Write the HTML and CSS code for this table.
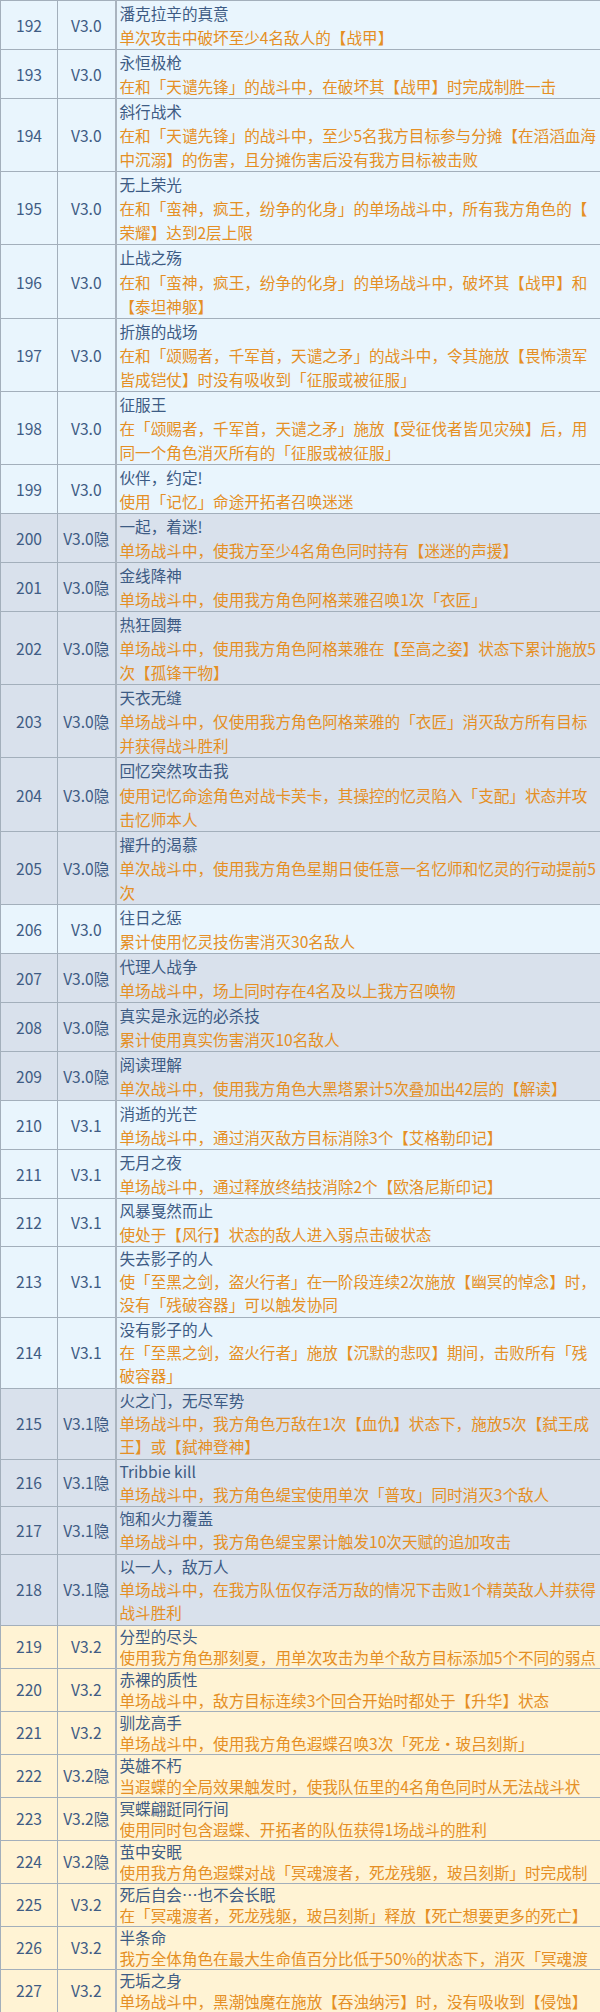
FILE: index.html
```html
<!DOCTYPE html>
<html lang="zh-CN">
<head>
<meta charset="utf-8">
<title>成就列表</title>
<link rel="stylesheet" href="styles.css">
</head>
<body>
<table class="ach">
<colgroup><col class="c-num"><col class="c-ver"><col class="c-info"></colgroup>
<tbody class="sec-a">
<tr class="blue"><td class="num">192</td><td class="ver">V3.0</td><td class="info"><div class="title">潘克拉辛的真意</div><div class="desc">单次攻击中破坏至少4名敌人的【战甲】</div></td></tr>
<tr class="blue"><td class="num">193</td><td class="ver">V3.0</td><td class="info"><div class="title">永恒极枪</div><div class="desc">在和「天谴先锋」的战斗中，在破坏其【战甲】时完成制胜一击</div></td></tr>
<tr class="blue"><td class="num">194</td><td class="ver">V3.0</td><td class="info"><div class="title">斜行战术</div><div class="desc">在和「天谴先锋」的战斗中，至少5名我方目标参与分摊【在滔滔血海中沉溺】的伤害，且分摊伤害后没有我方目标被击败</div></td></tr>
<tr class="blue"><td class="num">195</td><td class="ver">V3.0</td><td class="info"><div class="title">无上荣光</div><div class="desc">在和「蛮神，疯王，纷争的化身」的单场战斗中，所有我方角色的【荣耀】达到2层上限</div></td></tr>
<tr class="blue"><td class="num">196</td><td class="ver">V3.0</td><td class="info"><div class="title">止战之殇</div><div class="desc">在和「蛮神，疯王，纷争的化身」的单场战斗中，破坏其【战甲】和【泰坦神躯】</div></td></tr>
<tr class="blue"><td class="num">197</td><td class="ver">V3.0</td><td class="info"><div class="title">折旗的战场</div><div class="desc">在和「颂赐者，千军首，天谴之矛」的战斗中，令其施放【畏怖溃军皆成铠仗】时没有吸收到「征服或被征服」</div></td></tr>
<tr class="blue"><td class="num">198</td><td class="ver">V3.0</td><td class="info"><div class="title">征服王</div><div class="desc">在「颂赐者，千军首，天谴之矛」施放【受征伐者皆见灾殃】后，用同一个角色消灭所有的「征服或被征服」</div></td></tr>
<tr class="blue"><td class="num">199</td><td class="ver">V3.0</td><td class="info"><div class="title">伙伴，约定!</div><div class="desc">使用「记忆」命途开拓者召唤迷迷</div></td></tr>
<tr class="grey"><td class="num">200</td><td class="ver">V3.0隐</td><td class="info"><div class="title">一起，着迷!</div><div class="desc">单场战斗中，使我方至少4名角色同时持有【迷迷的声援】</div></td></tr>
<tr class="grey"><td class="num">201</td><td class="ver">V3.0隐</td><td class="info"><div class="title">金线降神</div><div class="desc">单场战斗中，使用我方角色阿格莱雅召唤1次「衣匠」</div></td></tr>
<tr class="grey"><td class="num">202</td><td class="ver">V3.0隐</td><td class="info"><div class="title">热狂圆舞</div><div class="desc">单场战斗中，使用我方角色阿格莱雅在【至高之姿】状态下累计施放5次【孤锋干物】</div></td></tr>
<tr class="grey"><td class="num">203</td><td class="ver">V3.0隐</td><td class="info"><div class="title">天衣无缝</div><div class="desc">单场战斗中，仅使用我方角色阿格莱雅的「衣匠」消灭敌方所有目标并获得战斗胜利</div></td></tr>
<tr class="grey"><td class="num">204</td><td class="ver">V3.0隐</td><td class="info"><div class="title">回忆突然攻击我</div><div class="desc">使用记忆命途角色对战卡芙卡，其操控的忆灵陷入「支配」状态并攻击忆师本人</div></td></tr>
<tr class="grey"><td class="num">205</td><td class="ver">V3.0隐</td><td class="info"><div class="title">擢升的渴慕</div><div class="desc">单次战斗中，使用我方角色星期日使任意一名忆师和忆灵的行动提前5次</div></td></tr>
<tr class="blue"><td class="num">206</td><td class="ver">V3.0</td><td class="info"><div class="title">往日之惩</div><div class="desc">累计使用忆灵技伤害消灭30名敌人</div></td></tr>
<tr class="grey"><td class="num">207</td><td class="ver">V3.0隐</td><td class="info"><div class="title">代理人战争</div><div class="desc">单场战斗中，场上同时存在4名及以上我方召唤物</div></td></tr>
<tr class="grey"><td class="num">208</td><td class="ver">V3.0隐</td><td class="info"><div class="title">真实是永远的必杀技</div><div class="desc">累计使用真实伤害消灭10名敌人</div></td></tr>
<tr class="grey"><td class="num">209</td><td class="ver">V3.0隐</td><td class="info"><div class="title">阅读理解</div><div class="desc">单次战斗中，使用我方角色大黑塔累计5次叠加出42层的【解读】</div></td></tr>
<tr class="blue"><td class="num">210</td><td class="ver">V3.1</td><td class="info"><div class="title">消逝的光芒</div><div class="desc">单场战斗中，通过消灭敌方目标消除3个【艾格勒印记】</div></td></tr>
<tr class="blue"><td class="num">211</td><td class="ver">V3.1</td><td class="info"><div class="title">无月之夜</div><div class="desc">单场战斗中，通过释放终结技消除2个【欧洛尼斯印记】</div></td></tr>
</tbody>
<tbody class="sec-b">
<tr class="blue"><td class="num">212</td><td class="ver">V3.1</td><td class="info"><div class="title">风暴戛然而止</div><div class="desc">使处于【风行】状态的敌人进入弱点击破状态</div></td></tr>
<tr class="blue"><td class="num">213</td><td class="ver">V3.1</td><td class="info"><div class="title">失去影子的人</div><div class="desc">使「至黑之剑，盗火行者」在一阶段连续2次施放【幽冥的悼念】时，没有「残破容器」可以触发协同</div></td></tr>
<tr class="blue"><td class="num">214</td><td class="ver">V3.1</td><td class="info"><div class="title">没有影子的人</div><div class="desc">在「至黑之剑，盗火行者」施放【沉默的悲叹】期间，击败所有「残破容器」</div></td></tr>
<tr class="grey"><td class="num">215</td><td class="ver">V3.1隐</td><td class="info"><div class="title">火之门，无尽军势</div><div class="desc">单场战斗中，我方角色万敌在1次【血仇】状态下，施放5次【弑王成王】或【弑神登神】</div></td></tr>
<tr class="grey"><td class="num">216</td><td class="ver">V3.1隐</td><td class="info"><div class="title">Tribbie kill</div><div class="desc">单场战斗中，我方角色缇宝使用单次「普攻」同时消灭3个敌人</div></td></tr>
<tr class="grey"><td class="num">217</td><td class="ver">V3.1隐</td><td class="info"><div class="title">饱和火力覆盖</div><div class="desc">单场战斗中，我方角色缇宝累计触发10次天赋的追加攻击</div></td></tr>
<tr class="grey"><td class="num">218</td><td class="ver">V3.1隐</td><td class="info"><div class="title">以一人，敌万人</div><div class="desc">单场战斗中，在我方队伍仅存活万敌的情况下击败1个精英敌人并获得战斗胜利</div></td></tr>
</tbody>
<tbody class="sec-c">
<tr class="yellow"><td class="num">219</td><td class="ver">V3.2</td><td class="info"><div class="title">分型的尽头</div><div class="desc">使用我方角色那刻夏，用单次攻击为单个敌方目标添加5个不同的弱点</div></td></tr>
<tr class="yellow"><td class="num">220</td><td class="ver">V3.2</td><td class="info"><div class="title">赤裸的质性</div><div class="desc">单场战斗中，敌方目标连续3个回合开始时都处于【升华】状态</div></td></tr>
<tr class="yellow"><td class="num">221</td><td class="ver">V3.2</td><td class="info"><div class="title">驯龙高手</div><div class="desc">单场战斗中，使用我方角色遐蝶召唤3次「死龙·玻吕刻斯」</div></td></tr>
<tr class="yellow"><td class="num">222</td><td class="ver">V3.2隐</td><td class="info"><div class="title">英雄不朽</div><div class="desc">当遐蝶的全局效果触发时，使我队伍里的4名角色同时从无法战斗状</div></td></tr>
<tr class="yellow"><td class="num">223</td><td class="ver">V3.2隐</td><td class="info"><div class="title">冥蝶翩跹同行间</div><div class="desc">使用同时包含遐蝶、开拓者的队伍获得1场战斗的胜利</div></td></tr>
<tr class="yellow"><td class="num">224</td><td class="ver">V3.2隐</td><td class="info"><div class="title">茧中安眠</div><div class="desc">使用我方角色遐蝶对战「冥魂渡者，死龙残躯，玻吕刻斯」时完成制</div></td></tr>
<tr class="yellow"><td class="num">225</td><td class="ver">V3.2</td><td class="info"><div class="title">死后自会…也不会长眠</div><div class="desc">在「冥魂渡者，死龙残躯，玻吕刻斯」释放【死亡想要更多的死亡】</div></td></tr>
<tr class="yellow"><td class="num">226</td><td class="ver">V3.2</td><td class="info"><div class="title">半条命</div><div class="desc">我方全体角色在最大生命值百分比低于50%的状态下，消灭「冥魂渡</div></td></tr>
<tr class="yellow"><td class="num">227</td><td class="ver">V3.2</td><td class="info"><div class="title">无垢之身</div><div class="desc">单场战斗中，黑潮蚀魔在施放【吞浊纳污】时，没有吸收到【侵蚀】</div></td></tr>
</tbody>
</table>
</body>
</html>
```

FILE: styles.css
```css
html, body {
  margin: 0;
  padding: 0;
  background: #ffffff;
}

body {
  font-family: "Noto Sans CJK SC", "Noto Sans", sans-serif;
  font-size: 15.6px;
}

.ach {
  width: 600px;
  table-layout: fixed;
  border-collapse: collapse;
  border-left: 1px solid #a3afbb;
  border-top: 1px solid #a3afbb;
}

.c-num { width: 57px; }
.c-ver { width: 58px; }
.c-info { width: 485px; }

.ach td {
  border-bottom: 1px solid #a3afbb;
  border-right: 1px solid #a3afbb;
  padding: 0;
  vertical-align: middle;
}

.ach td.num,
.ach td.ver {
  text-align: center;
  color: #3f5c84;
  white-space: nowrap;
}

.ach td.info {
  border-left: 2px solid #aab4bf;
  border-right: none;
  padding-left: 3px;
  overflow: hidden;
}

.title {
  color: #3d5b84;
}

.desc {
  color: #e58f24;
  line-break: anywhere;
}

.sec-a { line-height: 24.05px; }
.sec-b { line-height: 23.3px; }
.sec-c { line-height: 21px; }

.sec-c .desc {
  white-space: nowrap;
  overflow: hidden;
}

.blue { background: #e9f5fd; }
.grey { background: #d9e1ec; }
.yellow { background: #fff3d4; }
```
